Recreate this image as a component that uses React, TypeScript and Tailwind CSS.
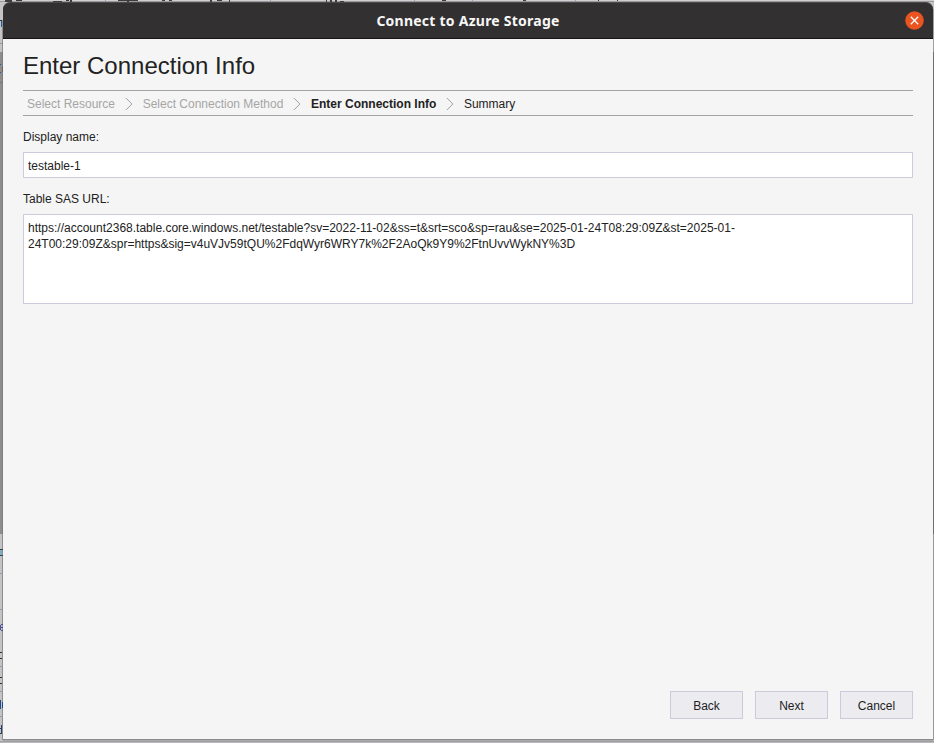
import React from "react";

const steps = ["Select Resource", "Select Connection Method", "Enter Connection Info", "Summary"];

// Slivers of the application window that stay visible around the dialog.
function Backdrop() {
  return (
    <svg className="absolute inset-0" width="934" height="743" viewBox="0 0 934 743" shapeRendering="crispEdges">
      <rect width="934" height="743" fill="#c4c4c6" />
      <rect width="934" height="1" fill="#cfcfd1" />
      <rect y="1" width="934" height="1" fill="#9a9a9b" />
      <path d="M5 0h7v2h-7zM16 0h6v1h-6zM53 1h9v1h-9zM66 0h3v1h-3zM70 0h2v2h-2zM118 0h20v1h-20zM127 0h2v2h-2zM162 0h3v1h-3zM169 0h3v1h-3zM210 0h2v2h-2zM217 0h5v1h-5zM229 0h1v2h-1zM326 0h1v2h-1zM330 0h2v2h-2zM335 0h2v2h-2zM340 1h4v1h-4zM442 0h4v1h-4zM523 0h3v1h-3zM598 0h1v1h-1zM617 0h1v1h-1z" fill="#3d3d3e" />
      <path d="M105 0h1v2h-1zM270 0h1v2h-1zM414 0h1v2h-1zM472 0h1v2h-1zM575 0h1v2h-1z" fill="#9a9ab5" />
      <rect y="20" width="2" height="1" fill="#333333" />
      <rect x="1" y="21" width="1" height="6" fill="#1d5d9d" />
      <rect y="43" width="3" height="1" fill="#99999d" />
      <rect y="52" width="3" height="482" fill="#8d8d8d" />
      <rect y="82" width="3" height="1" fill="#777777" />
      <path d="M0 64h1v1H0zM0 72h1v1H0z" fill="#235c9e" />
      <path d="M2 67h1v5H2z" fill="#5e3527" />
      <rect x="2" y="20" width="1" height="720" fill="#777777" opacity="0.7" />
      <path d="M0 549h3v1H0zM0 555h3v1H0z" fill="#334444" />
      <path d="M0 550h2v5H0z" fill="#7fafc8" />
      <path d="M0 573h3v1H0zM0 609h3v1H0zM0 666h3v1H0zM0 691h3v1H0zM0 716h3v1H0z" fill="#9999aa" />
      <path d="M1 624h2v1H1zM0 627h3v1H0zM1 630h2v1H1zM0 625h1v5H0z" fill="#4d4d99" />
      <path d="M0 652h2v1H0zM0 658h2v1H0zM0 677h2v1H0zM0 683h2v1H0z" fill="#303030" />
      <path d="M0 700h1v9H0zM2 702h1v6H2z" fill="#1d4d88" />
      <path d="M1 725h1v9H1zM0 728h1v1H0zM0 733h1v1H0z" fill="#29415f" />
      <rect x="933" y="9" width="1" height="43" fill="#a0a0a2" />
      <rect x="933" y="52" width="1" height="482" fill="#6f6f6f" />
      <rect x="933" y="534" width="1" height="206" fill="#98989a" />
      <rect x="3" y="739" width="930" height="1" fill="#8b8b8c" />
      <rect x="3" y="740" width="930" height="1" fill="#a8a8ab" />
      <rect y="741" width="934" height="1" fill="#9f9fa4" />
      <rect y="742" width="934" height="1" fill="#b9b9bc" />
    </svg>
  );
}

function Chevron() {
  return (
    <svg width="8" height="14" viewBox="0 0 8 14" fill="none" stroke="#a0a0a0" className="shrink-0">
      <path d="M.9 1 6.9 7 .9 13" />
    </svg>
  );
}

export default function App() {
  return (
    <div className="relative h-[743px] w-[934px] overflow-hidden font-['Liberation_Sans',Arial,sans-serif] text-xs text-[#222222]">
      <Backdrop />
      <div className="relative ml-[3px] flex h-[739px] w-[930px] flex-col pt-[2px]">
        <header className="grid h-[37px] shrink-0 grid-cols-[1fr_auto_1fr] items-center rounded-t-[7px] border-t border-b border-t-[#4c4a4a] border-b-[#171515] bg-[#333031] px-[9px]">
          <h1 className="col-start-2 w-[184px] text-center font-['Noto_Sans',sans-serif] text-[14px] leading-[18px] font-bold tracking-[0.24px] whitespace-nowrap text-[#f7f7f7]">
            Connect to Azure Storage
          </h1>
          <button aria-label="Close" className="h-[19px] w-[19px] justify-self-end">
            <svg width="19" height="19" viewBox="0 0 19 19">
              <circle cx="9.5" cy="9.5" r="9.3" fill="#e95420" />
              <path d="m5.8 5.8 7.4 7.4m0-7.4-7.4 7.4" stroke="#fff" strokeWidth="1.3" />
            </svg>
          </button>
        </header>
        <main className="flex min-h-0 flex-1 flex-col bg-[#f5f5f5] px-5 pb-5">
          <h2 className="mt-[13px] h-[38px] text-2xl leading-[28px]">Enter Connection Info</h2>
          <nav className="flex h-[26px] shrink-0 items-center border-y border-[#a3a3a3] pt-[2px] pl-1">
            {steps.map((step, i) => (
              <React.Fragment key={step}>
                {i > 0 && <span className="mr-[9.6px] ml-[10px] flex"><Chevron /></span>}
                <span className={i < 2 ? "text-[#a5a5a5]" : i === 2 ? "font-bold" : ""}>{step}</span>
              </React.Fragment>
            ))}
          </nav>
          <label className="mt-[13px] leading-4">Display name:</label>
          <div className="mt-[7px] h-[26px] shrink-0 border border-[#cccbdc] bg-white px-1 pt-[5px] leading-4">testable-1</div>
          <label className="mt-[13px] leading-4">Table SAS URL:</label>
          <div className="mt-[7px] h-[90px] shrink-0 border border-[#cccbdc] bg-white px-1 pt-[5px] leading-4">
            https://account2368.table.core.windows.net/testable?sv=2022-11-02&amp;ss=t&amp;srt=sco&amp;sp=rau&amp;se=2025-01-24T08:29:09Z&amp;st=2025-01-
            <br />
            24T00:29:09Z&amp;spr=https&amp;sig=v4uVJv59tQU%2FdqWyr6WRY7k%2F2AoQk9Y9%2FtnUvvWykNY%3D
          </div>
          <footer className="mt-auto flex justify-end gap-3">
            {["Back", "Next", "Cancel"].map((name) => (
              <button key={name} className="h-7 w-[73px] border border-[#cccbdc] bg-[#ececf0] pt-px">
                {name}
              </button>
            ))}
          </footer>
        </main>
      </div>
    </div>
  );
}
